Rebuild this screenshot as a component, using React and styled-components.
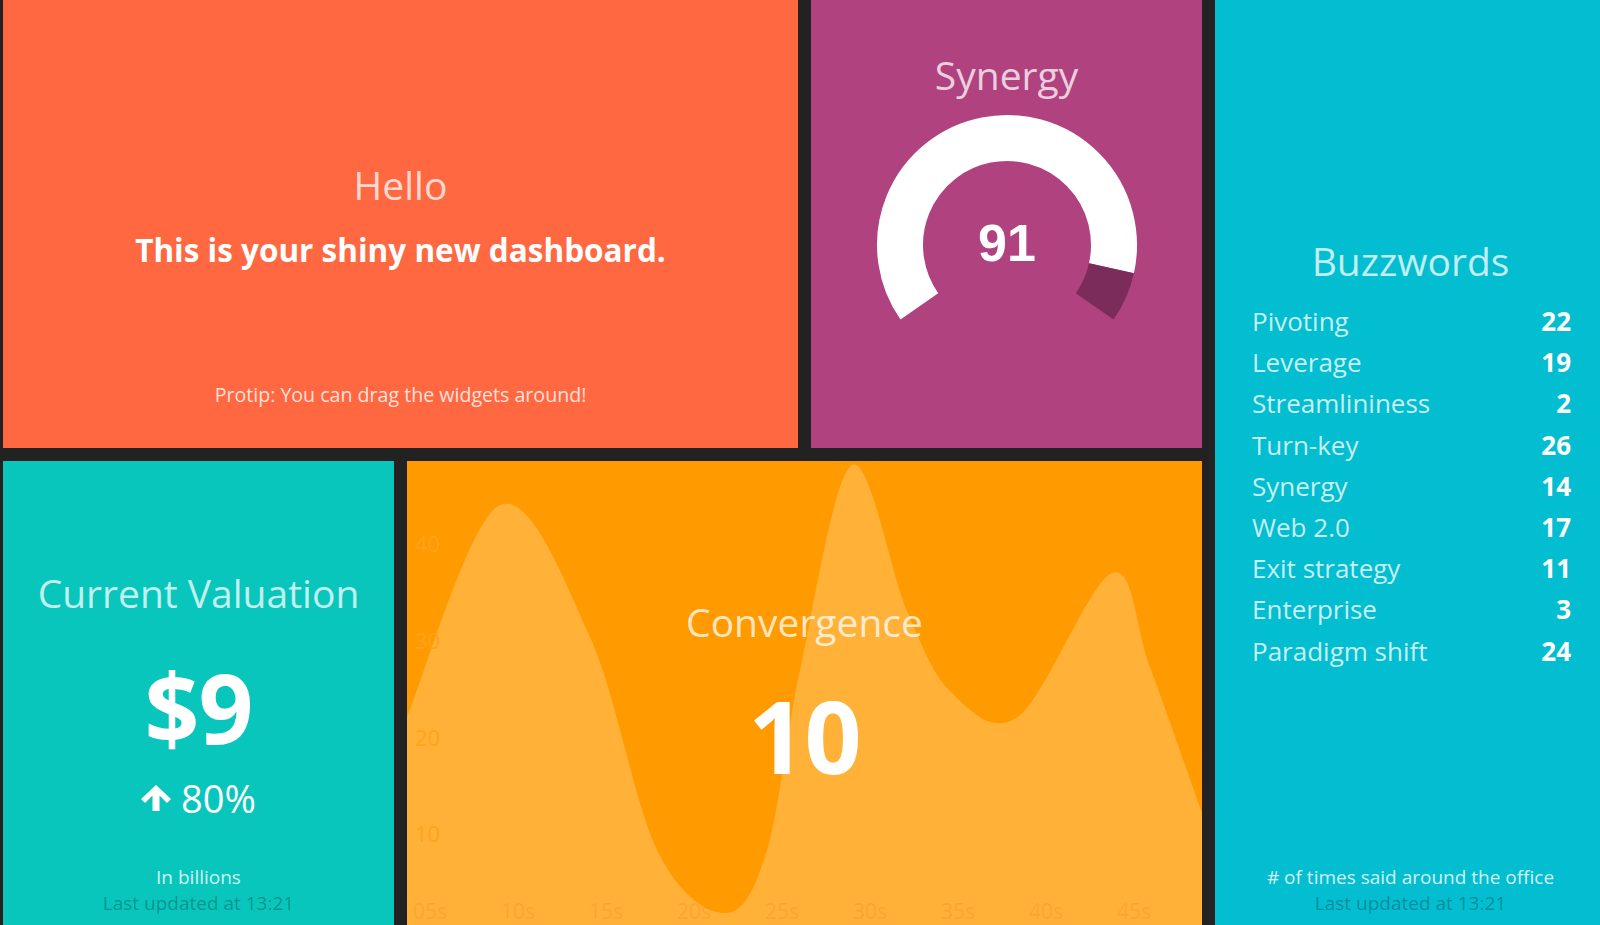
import React from 'react'
import styled, { createGlobalStyle } from 'styled-components'

const GlobalStyle = createGlobalStyle`
  html, body {
    margin: 0;
    padding: 0;
    background: #222;
    overflow: hidden;
  }
  body {
    font-family: 'Open Sans', 'Noto Sans', sans-serif;
  }
`

const Board = styled.main`
  display: grid;
  grid-template-columns: repeat(4, 391px);
  grid-template-rows: 448px 464px;
  gap: 13px;
  padding-left: 3px;
  width: 1640px;
  height: 925px;
`

const Widget = styled.section`
  position: relative;
  box-sizing: border-box;
  grid-column: ${(p) => p.$col};
  grid-row: ${(p) => p.$row};
  background: ${(p) => p.$bg};
  display: flex;
  flex-direction: column;
  align-items: center;
  padding-top: ${(p) => p.$top}px;
  padding-bottom: ${(p) => p.$bottom || 0}px;
  overflow: hidden;
  color: #fff;
  text-align: center;
`

const Title = styled.h1`
  position: relative;
  margin: 0;
  font-size: 39px;
  line-height: 48px;
  font-weight: 400;
  color: rgba(255, 255, 255, 0.75);
`

const Text = styled.h3`
  margin: 23px 0 0;
  font-size: 31.5px;
  line-height: 36px;
  font-weight: 700;
`

const BigValue = styled.p`
  position: relative;
  margin: ${(p) => p.$gap}px 0 0;
  font-size: ${(p) => p.$size}px;
  line-height: ${(p) => Math.round(p.$size * 1.1)}px;
  font-weight: 700;
  letter-spacing: -1px;
`

const Change = styled.p`
  display: flex;
  align-items: center;
  gap: 10px;
  margin: 15px 0 0;
  font-size: 38px;
  line-height: 46px;
  svg {
    width: 30px;
    height: 26px;
  }
`

const Footer = styled.footer`
  position: relative;
  margin-top: auto;
  display: flex;
  flex-direction: column;
  align-items: center;
`

const MoreInfo = styled.p`
  margin: 0;
  font-size: ${(p) => p.$size || 19}px;
  line-height: 26px;
  color: rgba(255, 255, 255, 0.82);
`

const UpdatedAt = styled.p`
  margin: 0;
  font-size: 19px;
  line-height: 26px;
  color: rgba(0, 0, 0, 0.27);
`

const List = styled.ul`
  list-style: none;
  box-sizing: border-box;
  width: 100%;
  margin: 16px 0 0;
  padding: 0 35px 0 37px;
`

const Item = styled.li`
  display: flex;
  justify-content: space-between;
  font-size: 26px;
  line-height: 41.2px;
`

const Label = styled.span`
  color: rgba(255, 255, 255, 0.78);
`

const Count = styled.span`
  font-weight: 700;
`

const Gauge = styled.svg`
  margin-top: 6px;
`

const Chart = styled.svg`
  position: absolute;
  top: 0;
  left: 0;
`

const polar = (cx, cy, r, deg) => {
  const a = (deg * Math.PI) / 180
  return [cx + r * Math.sin(a), cy - r * Math.cos(a)]
}

const arc = (cx, cy, r, from, to) => {
  const s = polar(cx, cy, r, from)
  const e = polar(cx, cy, r, to)
  const large = to - from > 180 ? 1 : 0
  return `M${s[0]},${s[1]} A${r},${r} 0 ${large} 1 ${e[0]},${e[1]}`
}

const Meter = ({ value }) => {
  const cx = 150
  const cy = 140
  const r = 107
  const end = -125 + 250 * (value / 100)
  return (
    <Gauge width='300' height='260' viewBox='0 0 300 260'>
      <path d={arc(cx, cy, r, -125, end)} stroke='#fff' strokeWidth='46' fill='none' />
      <path d={arc(cx, cy, r, end, 125)} stroke='#7b2c5b' strokeWidth='46' fill='none' />
      <text
        x={cx}
        y={cy - 2}
        textAnchor='middle'
        dominantBaseline='central'
        fill='#fff'
        fontFamily="'Liberation Sans', Arial, sans-serif"
        fontWeight='700'
        fontSize='52'
      >
        {value}
      </text>
    </Gauge>
  )
}

const W = 795
const H = 464
const points = [
  [0, 256], [93, 44], [183, 176], [250, 389], [318, 452], [360, 389],
  [393, 209], [445, 4], [500, 150], [545, 232], [612, 255], [705, 112],
  [743, 206], [795, 352],
]

const areaPath = (pts) => {
  let d = `M${pts[0][0]},${pts[0][1]}`
  for (let i = 0; i < pts.length - 1; i++) {
    const p0 = pts[i - 1] || pts[i]
    const p1 = pts[i]
    const p2 = pts[i + 1]
    const p3 = pts[i + 2] || p2
    const c1 = [p1[0] + (p2[0] - p0[0]) / 6, p1[1] + (p2[1] - p0[1]) / 6]
    const c2 = [p2[0] - (p3[0] - p1[0]) / 6, p2[1] - (p3[1] - p1[1]) / 6]
    d += ` C${c1} ${c2} ${p2}`
  }
  return `${d} L${W},${H} L0,${H} Z`
}

const yTicks = [
  ['40', 82],
  ['30', 179],
  ['20', 276],
  ['10', 372],
]
const xTicks = ['05s', '10s', '15s', '20s', '25s', '30s', '35s', '40s', '45s']

const Graph = () => (
  <Chart width={W} height={H} viewBox={`0 0 ${W} ${H}`}>
    <path d={areaPath(points)} fill='rgba(255,255,255,0.22)' />
    {yTicks.map(([t, y]) => (
      <text key={t} x='8' y={y} dominantBaseline='central' fontSize='22' fill='#ffa21c'>
        {t}
      </text>
    ))}
    {xTicks.map((t, i) => (
      <text
        key={t}
        x={23 + i * 88}
        y='458'
        textAnchor='middle'
        fontSize='21'
        fill='rgba(215,80,0,0.13)'
      >
        {t}
      </text>
    ))}
  </Chart>
)

const ArrowUp = () => (
  <svg viewBox='0 0 30 26' fill='#fff'>
    <path d='M15 0 L30 14 L26 18 L18.5 10.5 V26 H11.5 V10.5 L4 18 L0 14 Z' />
  </svg>
)

const buzzwords = [
  ['Pivoting', 22],
  ['Leverage', 19],
  ['Streamlininess', 2],
  ['Turn-key', 26],
  ['Synergy', 14],
  ['Web 2.0', 17],
  ['Exit strategy', 11],
  ['Enterprise', 3],
  ['Paradigm shift', 24],
]

const App = () => {
  return (
    <>
      <GlobalStyle />
      <Board>
        <Widget $col='1 / 3' $row='1' $bg='#ff6841' $top={161} $bottom={40}>
          <Title>Hello</Title>
          <Text>This is your shiny new dashboard.</Text>
          <Footer>
            <MoreInfo $size={19.6}>Protip: You can drag the widgets around!</MoreInfo>
          </Footer>
        </Widget>

        <Widget $col='3' $row='1' $bg='#b0427f' $top={51}>
          <Title>Synergy</Title>
          <Meter value={91} />
        </Widget>

        <Widget $col='4' $row='1 / 3' $bg='#03bdd0' $top={237} $bottom={9}>
          <Title>Buzzwords</Title>
          <List>
            {buzzwords.map(([label, n]) => (
              <Item key={label}>
                <Label>{label}</Label>
                <Count>{n}</Count>
              </Item>
            ))}
          </List>
          <Footer>
            <MoreInfo># of times said around the office</MoreInfo>
            <UpdatedAt>Last updated at 13:21</UpdatedAt>
          </Footer>
        </Widget>

        <Widget $col='1' $row='2' $bg='#08c6bc' $top={108} $bottom={9}>
          <Title>Current Valuation</Title>
          <BigValue $size={96} $gap={37}>$9</BigValue>
          <Change>
            <ArrowUp />
            80%
          </Change>
          <Footer>
            <MoreInfo>In billions</MoreInfo>
            <UpdatedAt>Last updated at 13:21</UpdatedAt>
          </Footer>
        </Widget>

        <Widget $col='2 / 4' $row='2' $bg='#ff9b00' $top={137}>
          <Graph />
          <Title>Convergence</Title>
          <BigValue $size={100} $gap={34}>10</BigValue>
        </Widget>
      </Board>
    </>
  )
}

export default App
